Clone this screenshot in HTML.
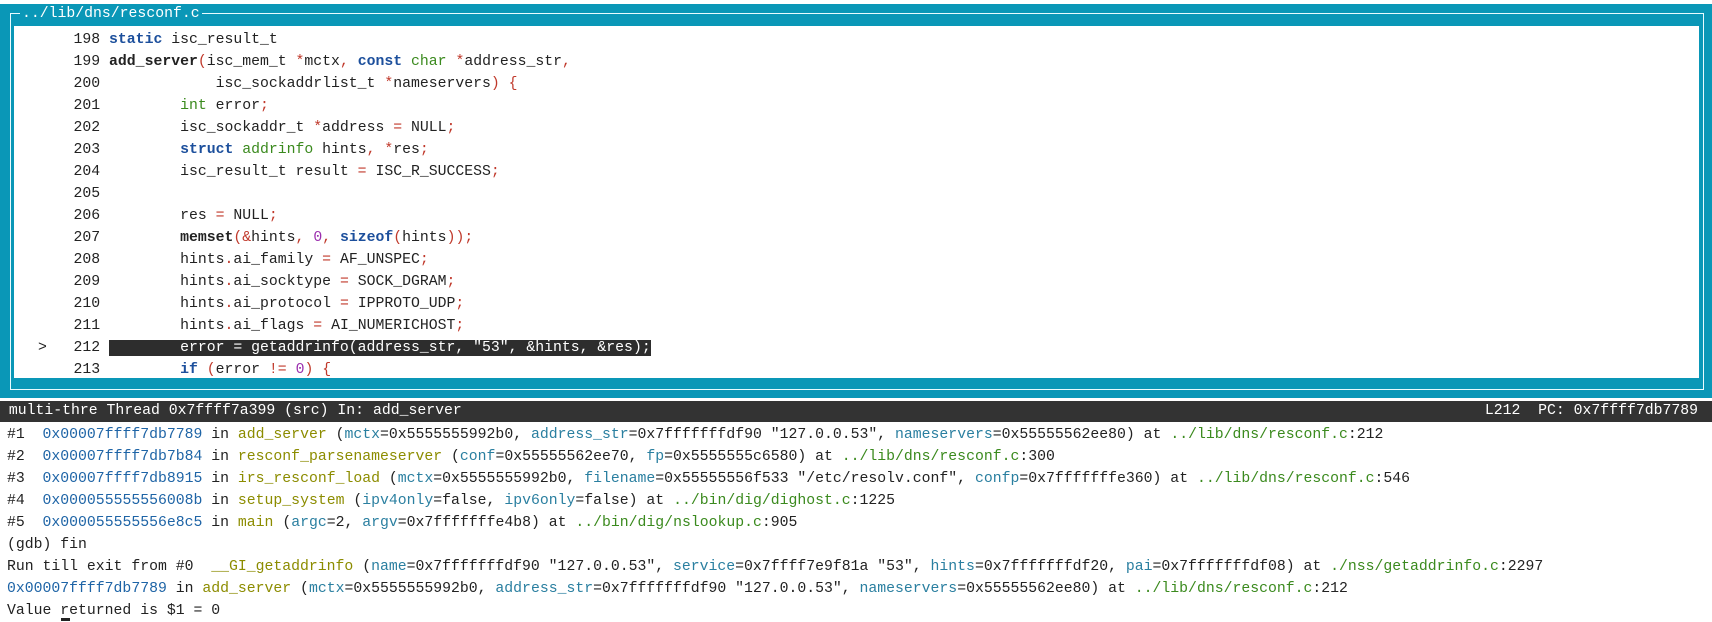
<!DOCTYPE html>
<html><head><meta charset="utf-8"><style>
*{margin:0;padding:0;box-sizing:border-box}
body{width:1712px;height:622px;background:#fff;position:relative;overflow:hidden;font-family:"Liberation Mono",monospace;font-size:14.8px;color:#222}
.teal{position:absolute;left:0;top:4px;width:1712px;height:394px;background:#0a97b7}
.frame{position:absolute;left:10px;top:13px;width:1694px;height:377px;border:1.5px solid #e8fbff;border-bottom-width:1.5px}
.content{position:absolute;left:14px;top:26px;width:1685px;height:352px;background:#fff}
.title{position:absolute;left:20px;top:4px;height:20px;line-height:20px;background:#0a97b7;color:#fff;padding:0 2px}
.l{position:absolute;left:38px;white-space:pre;line-height:22px;height:22px}
.b{position:absolute;left:7px;white-space:pre;line-height:22px;height:22px}
.k{color:#1c4f9c;font-weight:bold}
.t{color:#3b8a1e}
.f{font-weight:bold;color:#222}
.p{color:#c0392b}
.n{color:#9b2fae}
.hl{background:#2d2d2d;color:#fff}
.status{position:absolute;left:0;top:401px;width:1712px;height:21px;background:#333;color:#fff;line-height:21px;white-space:pre}
.h{color:#1e64a6}
.fn{color:#8c8c00}
.a{color:#2a7fa0}
.g{color:#3b8a1e}
</style></head><body>
<div class="teal"></div>
<div class="frame"></div>
<div class="content"></div>
<div class="title">../lib/dns/resconf.c</div>
<div class="l" style="top:29px">    198 <span class="k">static</span> isc_result_t</div>
<div class="l" style="top:51px">    199 <span class="f">add_server</span><span class="p">(</span>isc_mem_t <span class="p">*</span>mctx<span class="p">,</span> <span class="k">const</span> <span class="t">char</span> <span class="p">*</span>address_str<span class="p">,</span></div>
<div class="l" style="top:73px">    200             isc_sockaddrlist_t <span class="p">*</span>nameservers<span class="p">)</span> <span class="p">{</span></div>
<div class="l" style="top:95px">    201         <span class="t">int</span> error<span class="p">;</span></div>
<div class="l" style="top:117px">    202         isc_sockaddr_t <span class="p">*</span>address <span class="p">=</span> NULL<span class="p">;</span></div>
<div class="l" style="top:139px">    203         <span class="k">struct</span> <span class="t">addrinfo</span> hints<span class="p">,</span> <span class="p">*</span>res<span class="p">;</span></div>
<div class="l" style="top:161px">    204         isc_result_t result <span class="p">=</span> ISC_R_SUCCESS<span class="p">;</span></div>
<div class="l" style="top:183px">    205</div>
<div class="l" style="top:205px">    206         res <span class="p">=</span> NULL<span class="p">;</span></div>
<div class="l" style="top:227px">    207         <span class="f">memset</span><span class="p">(&amp;</span>hints<span class="p">,</span> <span class="n">0</span><span class="p">,</span> <span class="k">sizeof</span><span class="p">(</span>hints<span class="p">));</span></div>
<div class="l" style="top:249px">    208         hints<span class="p">.</span>ai_family <span class="p">=</span> AF_UNSPEC<span class="p">;</span></div>
<div class="l" style="top:271px">    209         hints<span class="p">.</span>ai_socktype <span class="p">=</span> SOCK_DGRAM<span class="p">;</span></div>
<div class="l" style="top:293px">    210         hints<span class="p">.</span>ai_protocol <span class="p">=</span> IPPROTO_UDP<span class="p">;</span></div>
<div class="l" style="top:315px">    211         hints<span class="p">.</span>ai_flags <span class="p">=</span> AI_NUMERICHOST<span class="p">;</span></div>
<div class="l" style="top:337px">&gt;   212 <span class="hl">        error = getaddrinfo(address_str, "53", &amp;hints, &amp;res);</span></div>
<div class="l" style="top:359px">    213         <span class="k">if</span> <span class="p">(</span>error <span class="p">!=</span> <span class="n">0</span><span class="p">)</span> <span class="p">{</span></div>
<div class="status"> multi-thre Thread 0x7ffff7a399 (src) In: add_server<span style="position:absolute;right:14px;top:0">L212  PC: 0x7ffff7db7789</span></div>
<div class="b" style="top:424px">#1  <span class="h">0x00007ffff7db7789</span> in <span class="fn">add_server</span> (<span class="a">mctx</span>=0x5555555992b0, <span class="a">address_str</span>=0x7fffffffdf90 "127.0.0.53", <span class="a">nameservers</span>=0x55555562ee80) at <span class="g">../lib/dns/resconf.c</span>:212</div>
<div class="b" style="top:446px">#2  <span class="h">0x00007ffff7db7b84</span> in <span class="fn">resconf_parsenameserver</span> (<span class="a">conf</span>=0x55555562ee70, <span class="a">fp</span>=0x5555555c6580) at <span class="g">../lib/dns/resconf.c</span>:300</div>
<div class="b" style="top:468px">#3  <span class="h">0x00007ffff7db8915</span> in <span class="fn">irs_resconf_load</span> (<span class="a">mctx</span>=0x5555555992b0, <span class="a">filename</span>=0x55555556f533 "/etc/resolv.conf", <span class="a">confp</span>=0x7fffffffe360) at <span class="g">../lib/dns/resconf.c</span>:546</div>
<div class="b" style="top:490px">#4  <span class="h">0x000055555556008b</span> in <span class="fn">setup_system</span> (<span class="a">ipv4only</span>=false, <span class="a">ipv6only</span>=false) at <span class="g">../bin/dig/dighost.c</span>:1225</div>
<div class="b" style="top:512px">#5  <span class="h">0x000055555556e8c5</span> in <span class="fn">main</span> (<span class="a">argc</span>=2, <span class="a">argv</span>=0x7fffffffe4b8) at <span class="g">../bin/dig/nslookup.c</span>:905</div>
<div class="b" style="top:534px">(gdb) fin</div>
<div class="b" style="top:556px">Run till exit from #0  <span class="fn">__GI_getaddrinfo</span> (<span class="a">name</span>=0x7fffffffdf90 "127.0.0.53", <span class="a">service</span>=0x7ffff7e9f81a "53", <span class="a">hints</span>=0x7fffffffdf20, <span class="a">pai</span>=0x7fffffffdf08) at <span class="g">./nss/getaddrinfo.c</span>:2297</div>
<div class="b" style="top:578px"><span class="h">0x00007ffff7db7789</span> in <span class="fn">add_server</span> (<span class="a">mctx</span>=0x5555555992b0, <span class="a">address_str</span>=0x7fffffffdf90 "127.0.0.53", <span class="a">nameservers</span>=0x55555562ee80) at <span class="g">../lib/dns/resconf.c</span>:212</div>
<div class="b" style="top:600px">Value returned is $1 = 0</div>
<div style="position:absolute;left:61px;top:618px;width:9px;height:3px;background:#222"></div>
</body></html>
